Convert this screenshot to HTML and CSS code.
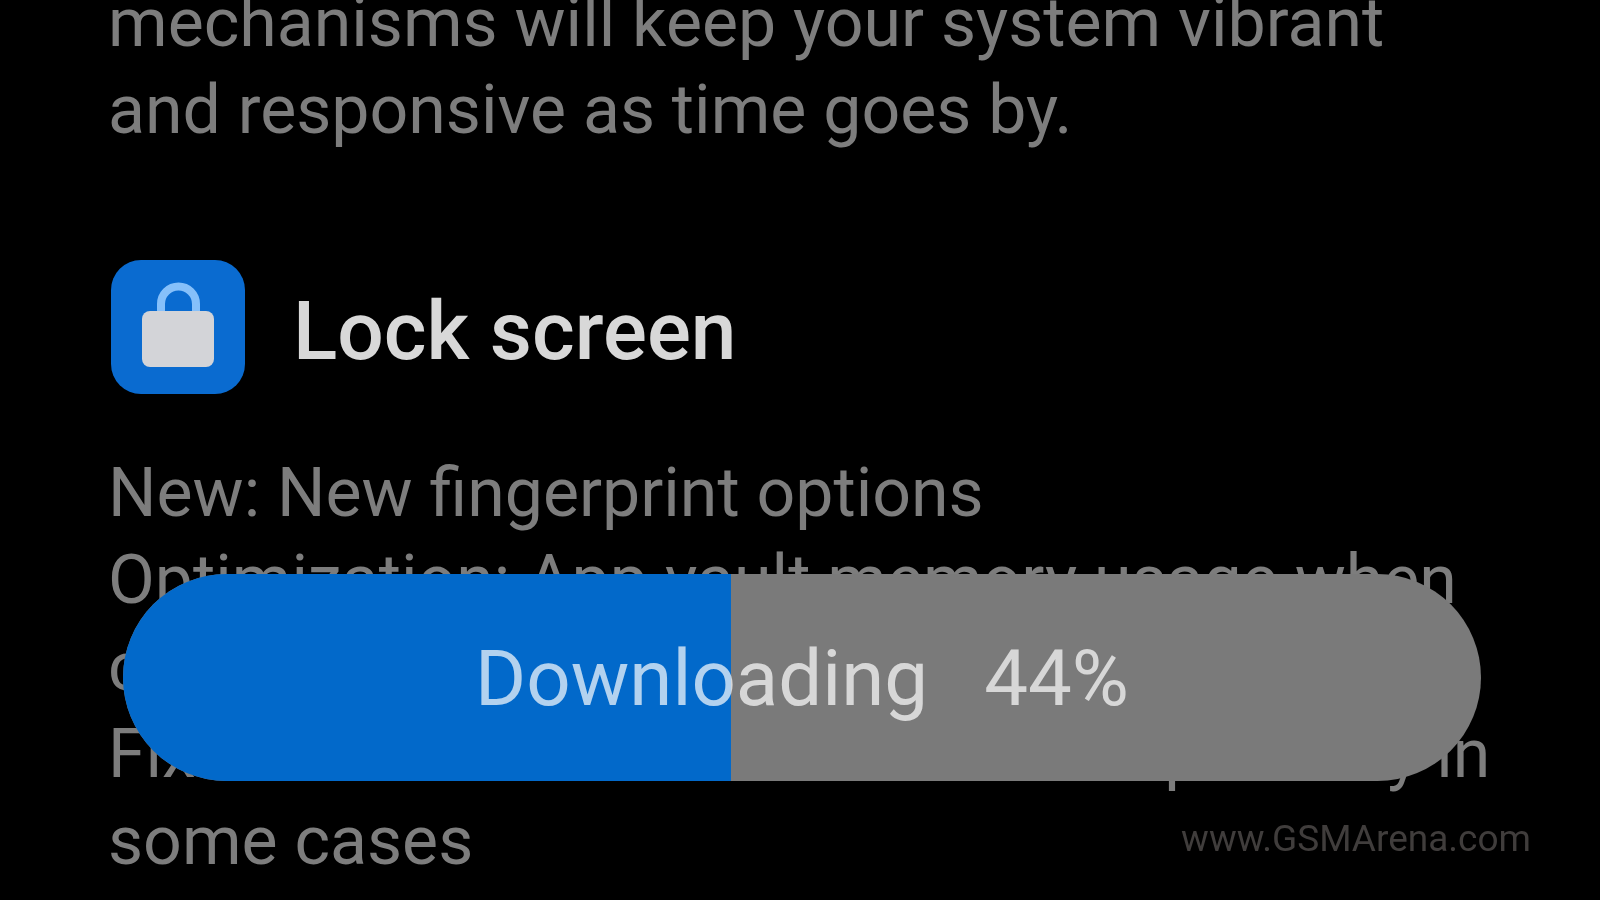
FILE: index.html
```html
<!DOCTYPE html>
<html lang="en">
<head>
<meta charset="utf-8">
<meta name="viewport" content="width=device-width, initial-scale=1">
<title>System update</title>
<link rel="stylesheet" href="styles.css">
</head>
<body>
<main class="changelog">
  <p class="notes">mechanisms will keep your system vibrant<br>and responsive as time goes by.</p>
  <section class="entry">
    <header class="entry-header">
      <svg class="entry-icon" viewBox="0 0 134 134" aria-hidden="true">
        <rect width="134" height="134" rx="30" fill="#0a6bd0"/>
        <path d="M50 56V44a17.500 17.500 0 0 1 35 0v12" fill="none" stroke="#86c0fa" stroke-width="8"/>
        <rect x="31" y="51" width="72" height="56" rx="8" fill="#d3d4d8"/>
      </svg>
      <h2 class="entry-title">Lock screen</h2>
    </header>
    <p class="notes">New: New fingerprint options<br>Optimization: App vault memory usage when<br>cleared<br>Fix: Lock screen items moved unexpectedly in<br>some cases</p>
  </section>
</main>
<div class="download" role="progressbar" aria-label="Downloading" aria-valuemin="0" aria-valuemax="100" aria-valuenow="44">
  <div class="download-fill" style="width: 44.8%"></div>
  <div class="download-label"><span>Downloading</span><span>44%</span></div>
</div>
<div class="watermark">www.GSMArena.com</div>
</body>
</html>
```
FILE: styles.css
```css
* {
  box-sizing: border-box;
}

body {
  margin: 0;
  min-height: 100vh;
  overflow: hidden;
  background: #000;
  color: #7d7d7d;
  font-family: Roboto, "Liberation Sans", sans-serif;
}

.changelog {
  margin-top: -20px;
  padding-left: 108px;
}

.notes {
  margin: 0;
  font-size: 68px;
  line-height: 87px;
  white-space: nowrap;
}

.entry-header {
  display: flex;
  align-items: center;
  gap: 48px;
  margin: 106px 0 56px 3px;
}

.entry-icon {
  flex: none;
  width: 134px;
  height: 134px;
}

.entry-title {
  margin: 0;
  padding-top: 8px;
  color: #d8d8d8;
  font-size: 82px;
  font-weight: 500;
  line-height: 96px;
}

.download {
  position: fixed;
  right: 119px;
  bottom: 119px;
  left: 123px;
  display: grid;
  height: 207px;
  overflow: hidden;
  border-radius: 104px;
  background: #7a7a7a;
}

.download-fill,
.download-label {
  grid-area: 1 / 1;
}

.download-fill {
  background: #0269ca;
}

.download-label {
  display: flex;
  align-items: center;
  justify-content: center;
  gap: 56px;
  padding-top: 2px;
  color: rgba(255, 255, 255, 0.7);
  font-size: 78px;
}

.watermark {
  position: fixed;
  right: 69px;
  bottom: 38px;
  color: #403d3c;
  font-size: 37px;
  line-height: 46px;
}
```
